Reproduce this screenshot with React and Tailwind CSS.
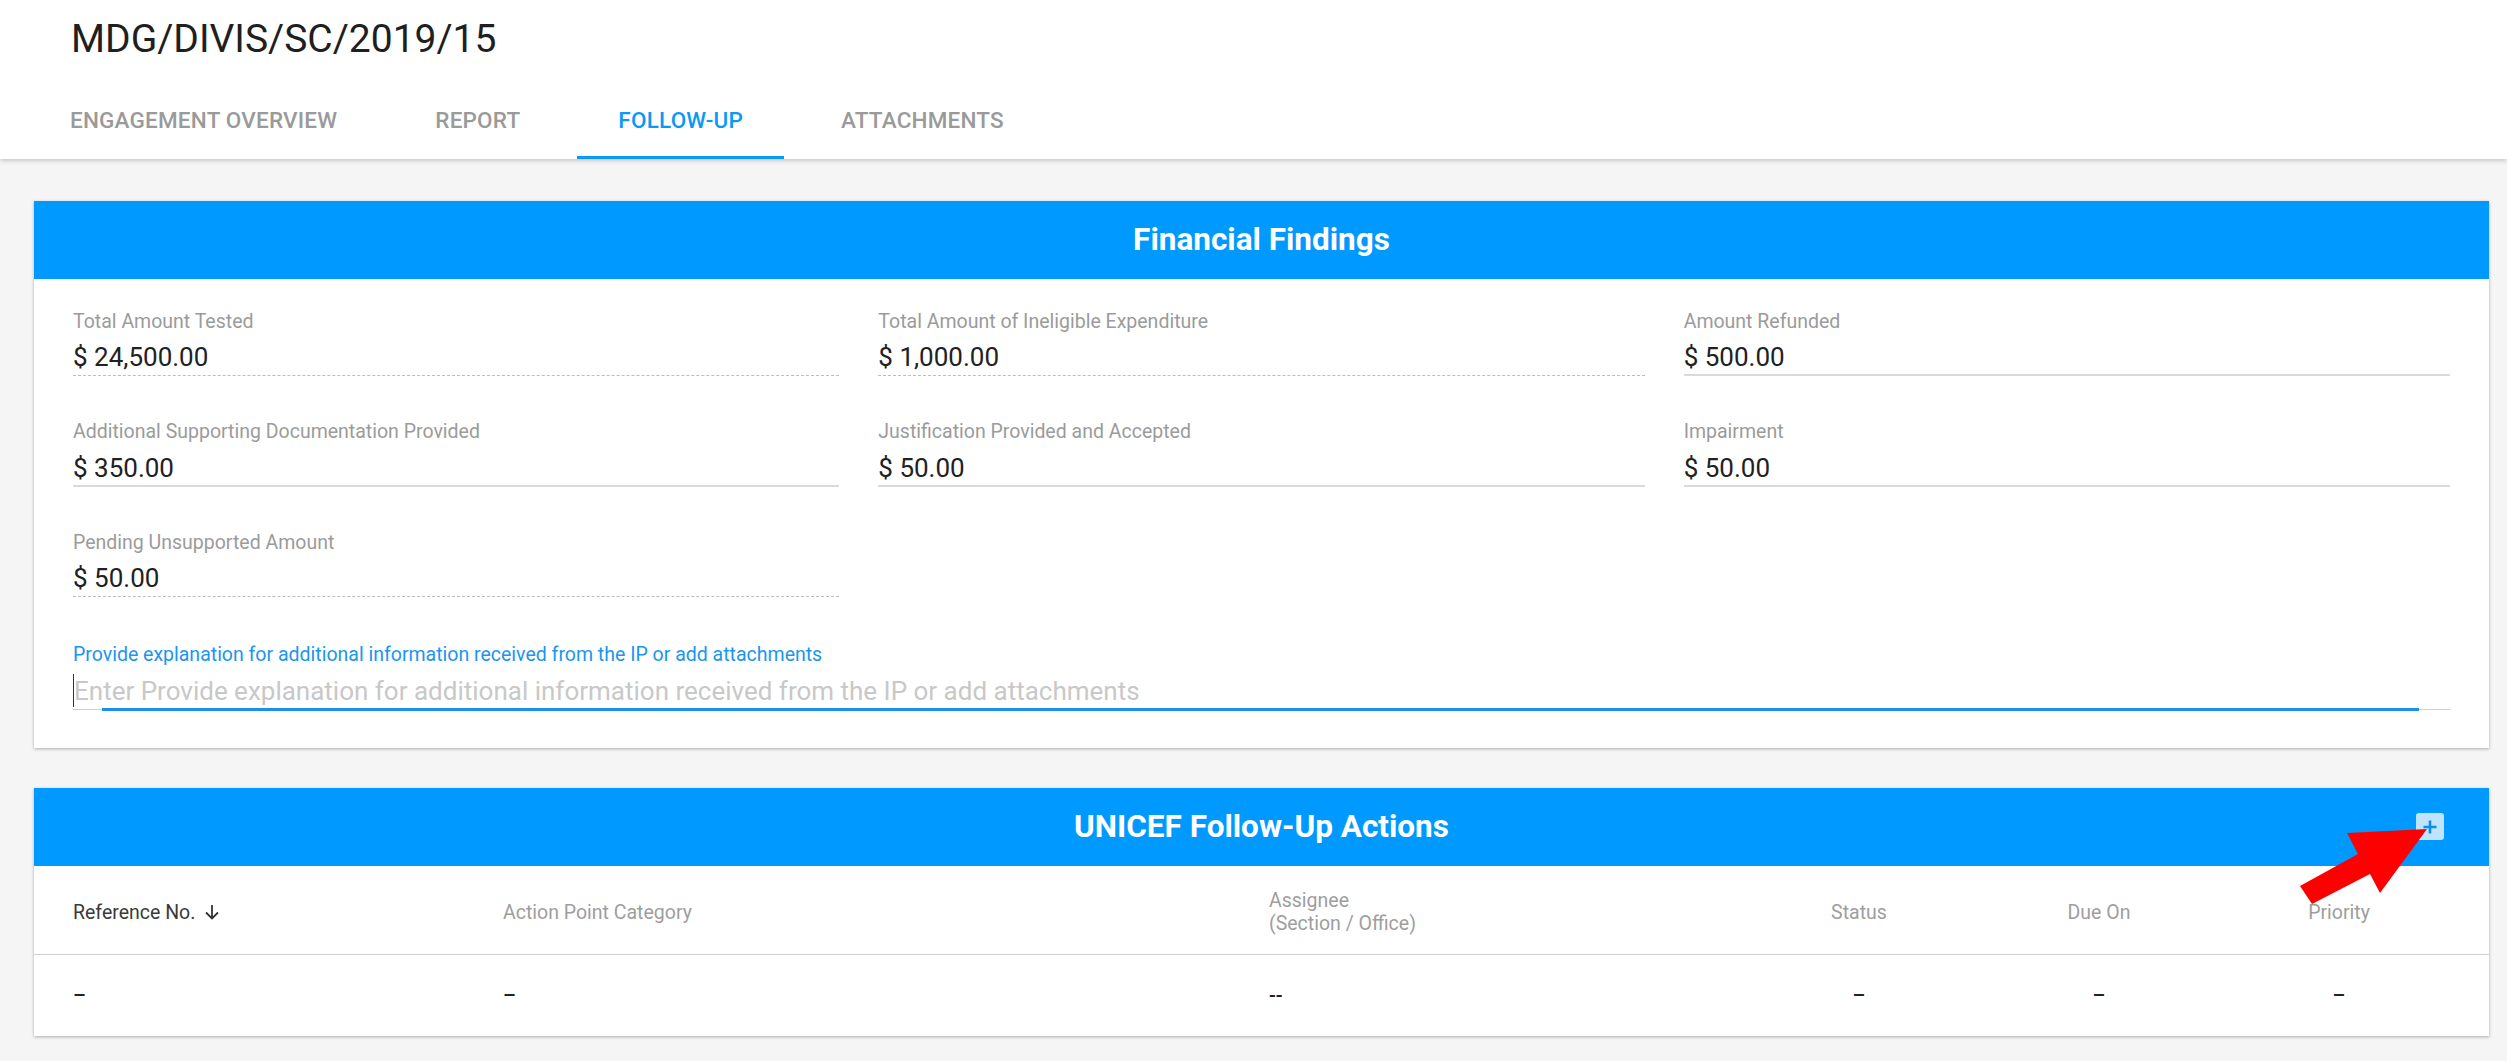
import React from 'react';

const tabs = ['ENGAGEMENT OVERVIEW', 'REPORT', 'FOLLOW-UP', 'ATTACHMENTS'];

const findings = [
    { label: 'Total Amount Tested', value: '$ 24,500.00', line: 'dashed' },
    { label: 'Total Amount of Ineligible Expenditure', value: '$ 1,000.00', line: 'dashed' },
    { label: 'Amount Refunded', value: '$ 500.00', line: 'solid' },
    { label: 'Additional Supporting Documentation Provided', value: '$ 350.00', line: 'solid' },
    { label: 'Justification Provided and Accepted', value: '$ 50.00', line: 'solid' },
    { label: 'Impairment', value: '$ 50.00', line: 'solid' },
    { label: 'Pending Unsupported Amount', value: '$ 50.00', line: 'dashed' },
];

const explanation = 'Provide explanation for additional information received from the IP or add attachments';

const Field = ({ label, value, line }) => (
    <div>
        <div className="text-[19.5px] leading-none text-[#9b9b9b]">{label}</div>
        <div
            className={
                line === 'dashed'
                    ? 'mt-[13px] pb-[5px] text-[26px] leading-none text-[#212121] border-b border-dashed border-[#bdbdbd]'
                    : 'mt-[13px] pb-[4px] text-[26px] leading-none text-[#212121] border-b-2 border-[#dadada]'
            }
        >
            {value}
        </div>
    </div>
);

const CardHeader = ({ title, action }) => (
    <div className="grid grid-cols-[1fr_auto_1fr] items-center h-[78px] bg-[#0099ff]">
        <div />
        <h2 className="text-[31.5px] font-bold leading-none text-white">{title}</h2>
        <div className="flex justify-end pr-[45px]">{action}</div>
    </div>
);

const AddButton = () => (
    <button className="flex items-center justify-center w-[28px] h-[27px] rounded-[3px] bg-[#bfe4ff]">
        <svg width="16" height="16" viewBox="0 0 16 16">
            <path d="M8 1.5v13M1.5 8h13" stroke="#0a8fe8" strokeWidth="2.6" />
        </svg>
    </button>
);

// annotation arrow pointing at the add button
const RedArrow = () => (
    <svg className="absolute right-[62px] top-[41px]" width="127" height="75" viewBox="0 0 127 75">
        <polygon points="127,0 47,4 58,25 0,57 12,75 70,45 80,64" fill="#ff0000" />
    </svg>
);

const columns = [
    { name: 'Reference No.', align: 'left', sorted: true },
    { name: 'Action Point Category', align: 'left' },
    { name: ['Assignee', '(Section / Office)'], align: 'left' },
    { name: 'Status', align: 'center' },
    { name: 'Due On', align: 'center' },
    { name: 'Priority', align: 'center' },
];

const rowValues = ['–', '–', '--', '–', '–', '–'];

const App = () => {
    return (
        <div className="min-h-[1061px] bg-[#f5f5f5] font-['Roboto',sans-serif]">
            {/* page header */}
            <div className="bg-white shadow-[0_2px_4px_rgba(0,0,0,0.18)]">
                <h1 className="pt-[20px] pl-[71px] text-[39px] leading-none text-[#1f1f1f]">MDG/DIVIS/SC/2019/15</h1>
                <div className="flex gap-[16px] pl-[29px] mt-[50px]">
                    {tabs.map((tab) => (
                        <div key={tab} className="flex flex-col">
                            <span
                                className={
                                    tab === 'FOLLOW-UP'
                                        ? 'px-[41px] text-[22.5px] tracking-[0.2px] font-medium leading-none text-[#0a99f5] pb-[24px]'
                                        : 'px-[41px] text-[22.5px] tracking-[0.2px] font-medium leading-none text-[#9a9a9a] pb-[24px]'
                                }
                            >
                                {tab}
                            </span>
                            <div className={tab === 'FOLLOW-UP' ? 'h-[3px] bg-[#0a99f5]' : 'h-[3px]'} />
                        </div>
                    ))}
                </div>
            </div>

            {/* financial findings */}
            <div className="ml-[34px] mr-[18px] mt-[42px] bg-white shadow-[0_1px_3px_rgba(0,0,0,0.3)]">
                <CardHeader title="Financial Findings" />
                <div className="px-[39px] pt-[33px] pb-[38px]">
                    <div className="grid grid-cols-3 gap-x-[39px] gap-y-[46px]">
                        {findings.map((f) => (
                            <Field key={f.label} {...f} />
                        ))}
                    </div>
                    <div className="mt-[48px] text-[19.5px] leading-none text-[#1a96ee]">{explanation}</div>
                    <div className="relative mt-[13px] pb-[5px] border-b border-[#d0d0d0]">
                        <div className="flex items-center">
                            <span className="w-[1px] h-[33px] -my-[4px] bg-[#333]" />
                            <span className="text-[26px] leading-none text-[#c8c8c8]">Enter {explanation}</span>
                        </div>
                        <span className="absolute left-[29px] right-[31px] bottom-[-2px] h-[3px] bg-[#1a90ee]" />
                    </div>
                </div>
            </div>

            {/* follow-up actions */}
            <div className="relative ml-[34px] mr-[18px] mt-[40px] bg-white shadow-[0_1px_3px_rgba(0,0,0,0.3)]">
                <CardHeader title="UNICEF Follow-Up Actions" action={<AddButton />} />
                <div className="grid grid-cols-[430px_766px_470px_240px_240px_240px] items-center h-[89px] pt-[5px] pl-[39px] pr-[30px] border-b border-[#cfcfcf]">
                    {columns.map((col, i) => (
                        <div
                            key={i}
                            className={
                                col.align === 'center'
                                    ? 'text-center text-[19.5px] leading-[23px] text-[#9e9e9e]'
                                    : col.sorted
                                        ? 'flex items-center gap-[9px] text-[19.5px] leading-[23px] text-[#3a3a3a]'
                                        : 'text-[19.5px] leading-[23px] text-[#9e9e9e]'
                            }
                        >
                            {Array.isArray(col.name) ? (
                                col.name.map((line) => <div key={line}>{line}</div>)
                            ) : (
                                <span>{col.name}</span>
                            )}
                            {col.sorted && (
                                <svg width="16" height="16" viewBox="0 0 16 16">
                                    <path d="M8 1v13.5M2 8.5l6 6 6-6" stroke="#333" strokeWidth="1.8" fill="none" />
                                </svg>
                            )}
                        </div>
                    ))}
                </div>
                <div className="grid grid-cols-[430px_766px_470px_240px_240px_240px] items-center h-[81px] pl-[39px] pr-[30px]">
                    {rowValues.map((v, i) => (
                        <div
                            key={i}
                            className={
                                i > 2
                                    ? 'text-center text-[20px] font-medium text-[#222]'
                                    : 'text-[20px] font-medium text-[#222]'
                            }
                        >
                            {v}
                        </div>
                    ))}
                </div>
                <RedArrow />
            </div>
        </div>
    );
};

export default App;
